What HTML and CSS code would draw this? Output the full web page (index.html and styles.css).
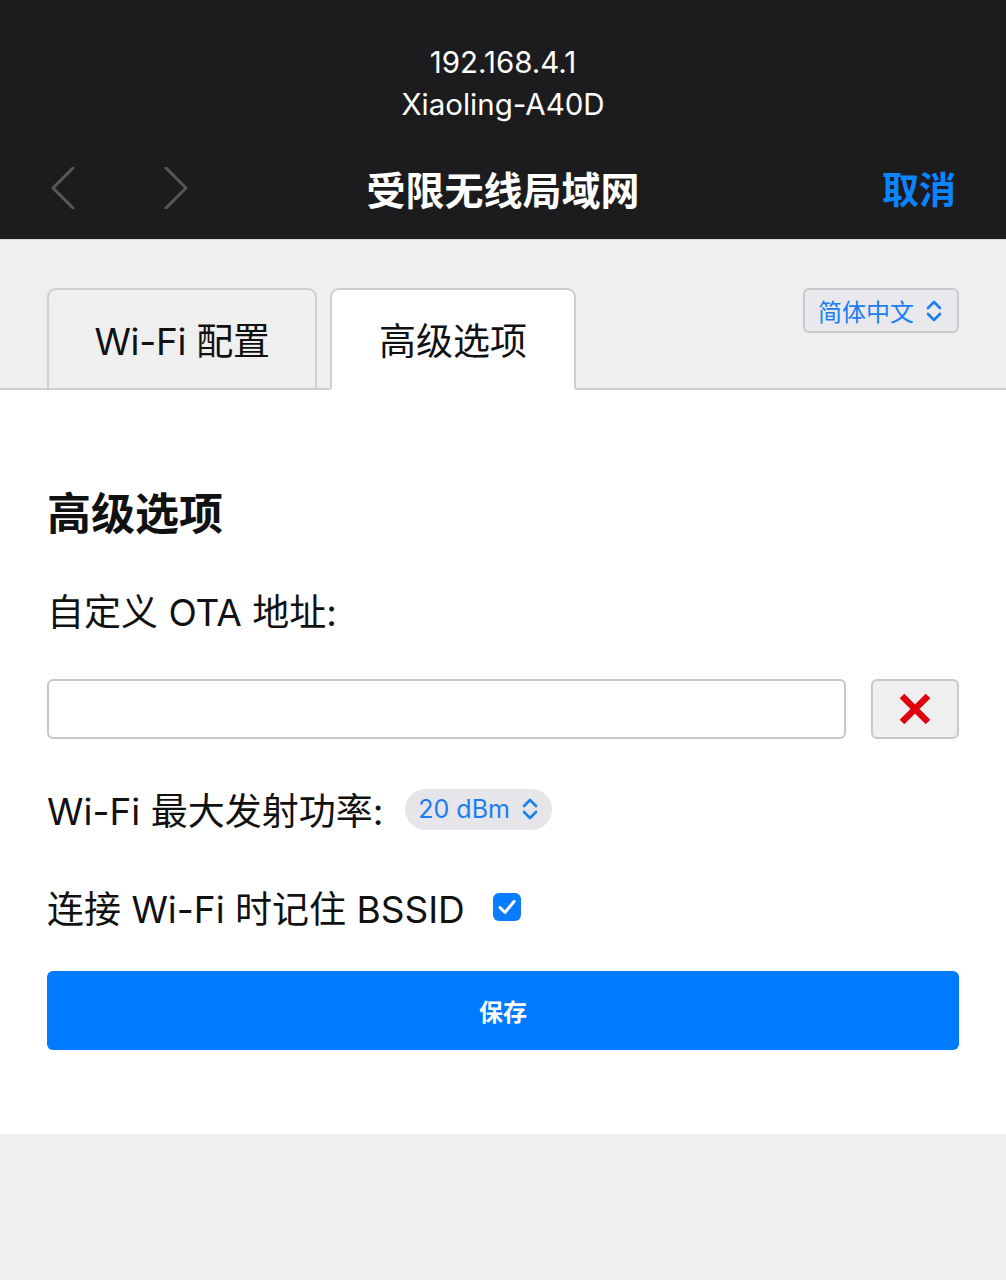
FILE: index.html
```html
<!DOCTYPE html>
<html lang="zh-CN">
<head>
<meta charset="utf-8">
<title>受限无线局域网</title>
<link rel="stylesheet" href="styles.css">
</head>
<body>
<header class="topbar">
  <div class="host">192.168.4.1</div>
  <div class="host">Xiaoling-A40D</div>
  <div class="nav">
    <div class="arrows">
      <svg class="chev" width="26" height="42" viewBox="0 0 26 42"><path d="M23 1 L3 21 L23 41" fill="none" stroke="#56565a" stroke-width="3" stroke-linecap="round" stroke-linejoin="round"/></svg>
      <svg class="chev" width="26" height="42" viewBox="0 0 26 42"><path d="M3 1 L23 21 L3 41" fill="none" stroke="#56565a" stroke-width="3" stroke-linecap="round" stroke-linejoin="round"/></svg>
    </div>
    <div class="title">受限无线局域网</div>
    <div class="cancel">取消</div>
  </div>
</header>

<div class="tabbar">
  <div class="tabs">
    <div class="tab tab-wifi">Wi-Fi 配置</div>
    <div class="tab tab-adv active">高级选项</div>
  </div>
  <div class="lang">
    <span>简体中文</span>
    <svg width="16" height="22" viewBox="0 0 16 22"><path d="M2 8 L8 2 L14 8 M2 14 L8 20 L14 14" fill="none" stroke="#1a7ef0" stroke-width="2.6" stroke-linecap="round" stroke-linejoin="round"/></svg>
  </div>
</div>

<main class="content">
  <h2 class="heading">高级选项</h2>
  <div class="label">自定义 OTA 地址:</div>
  <div class="input-row">
    <div class="input"></div>
    <div class="clear">
      <svg width="34" height="34" viewBox="0 0 34 34"><path d="M4 4 L30 30 M30 4 L4 30" stroke="#e0000e" stroke-width="6.5" stroke-linecap="butt"/></svg>
    </div>
  </div>
  <div class="power-row">
    <span class="text">Wi-Fi 最大发射功率:</span>
    <div class="pill">
      <span>20 dBm</span>
      <svg width="16" height="22" viewBox="0 0 16 22"><path d="M2 8 L8 2 L14 8 M2 14 L8 20 L14 14" fill="none" stroke="#1a7ef0" stroke-width="2.6" stroke-linecap="round" stroke-linejoin="round"/></svg>
    </div>
  </div>
  <div class="check-row">
    <span class="text">连接 Wi-Fi 时记住 BSSID</span>
    <div class="checkbox">
      <svg width="20" height="18" viewBox="0 0 20 18"><path d="M3 9.5 L8 14.5 L17 3.5" fill="none" stroke="#fff" stroke-width="3" stroke-linecap="round" stroke-linejoin="round"/></svg>
    </div>
  </div>
  <div class="save">保存</div>
</main>
</body>
</html>
```

FILE: styles.css
```css
html, body {
  margin: 0;
  padding: 0;
  background: #efefef;
  font-family: Inter, "Noto Sans CJK SC", sans-serif;
  color: #111;
}

.topbar {
  background: #1c1c1e;
  padding-top: 41px;
  height: 198px;
  color: #fff;
}

.host {
  text-align: center;
  font-size: 29.5px;
  line-height: 42px;
  font-family: Inter, "Noto Sans CJK SC", sans-serif;
}

.nav {
  display: flex;
  align-items: center;
  height: 76px;
  margin-top: 25px;
  padding: 0 50px;
}

.arrows {
  display: flex;
  gap: 87px;
  width: 200px;
}

.title {
  flex: 1;
  text-align: center;
  font-size: 39px;
  font-weight: 700;
  font-family: "Noto Sans CJK SC", sans-serif;
}

.cancel {
  width: 200px;
  text-align: right;
  color: #0a84ff;
  font-size: 37px;
  font-weight: 700;
  font-family: "Noto Sans CJK SC", sans-serif;
}

.tabbar {
  display: flex;
  justify-content: space-between;
  height: 151px;
  padding: 0 47px;
  border-top: 1px solid #d9d9d9;
  box-sizing: border-box;
  border-bottom: 2px solid #cfcfcf;
}

.tabs {
  display: flex;
  align-self: flex-end;
  gap: 13px;
  margin-bottom: -2px;
}

.tab {
  height: 102px;
  box-sizing: border-box;
  border: 2px solid #cfcfcf;
  border-radius: 9px 9px 0 0;
  background: #efefef;
  font-size: 37px;
  display: flex;
  align-items: center;
  justify-content: center;
  font-family: Inter, "Noto Sans CJK SC", sans-serif;
  color: #111;
}

.tab-wifi {
  width: 270px;
  letter-spacing: -0.3px;
}

.tab-adv {
  width: 246px;
}

.tab.active {
  background: #fff;
  border-bottom-color: #fff;
}

.lang {
  align-self: flex-start;
  margin-top: 48px;
  height: 45px;
  box-sizing: border-box;
  width: 156px;
  border: 2px solid #c9c9cc;
  border-radius: 6px;
  background: #e9e9ed;
  display: flex;
  align-items: center;
  gap: 12px;
  padding-left: 13px;
  color: #1a7ef0;
  font-size: 24px;
  font-family: "Noto Sans CJK SC", sans-serif;
}

.content {
  background: #fff;
  padding: 96px 47px 84px;
}

.heading {
  margin: 0;
  font-size: 44px;
  line-height: 50px;
  font-weight: 700;
  font-family: "Noto Sans CJK SC", sans-serif;
  color: #111;
}

.label {
  margin-top: 52px;
  font-size: 37px;
  line-height: 50px;
  font-family: Inter, "Noto Sans CJK SC", sans-serif;
}

.input-row {
  display: flex;
  gap: 25px;
  margin-top: 41px;
  height: 60px;
}

.input {
  flex: 1;
  border: 2px solid #c8c8c8;
  border-radius: 6px;
  background: #fff;
}

.clear {
  width: 88px;
  box-sizing: border-box;
  border: 2px solid #c8c8c8;
  border-radius: 6px;
  background: #efefef;
  display: flex;
  align-items: center;
  justify-content: center;
}

.power-row,
.check-row {
  display: flex;
  align-items: center;
  height: 50px;
}

.power-row {
  margin-top: 45px;
  gap: 22px;
}

.check-row {
  margin-top: 48px;
  gap: 28px;
}

.text {
  font-size: 37px;
  font-family: Inter, "Noto Sans CJK SC", sans-serif;
}

.pill {
  height: 41px;
  width: 147px;
  box-sizing: border-box;
  border-radius: 21px;
  background: #e5e5ea;
  display: flex;
  align-items: center;
  gap: 12px;
  padding-left: 13px;
  color: #1a7ef0;
  font-size: 25px;
  font-family: Inter, sans-serif;
}

.checkbox {
  width: 28px;
  height: 28px;
  border-radius: 6px;
  background: #0a7cff;
  display: flex;
  align-items: center;
  justify-content: center;
}

.save {
  margin-top: 39px;
  height: 79px;
  border-radius: 6px;
  background: #007aff;
  color: #fff;
  font-size: 24px;
  font-weight: 700;
  display: flex;
  align-items: center;
  justify-content: center;
  font-family: "Noto Sans CJK SC", sans-serif;
}
```
